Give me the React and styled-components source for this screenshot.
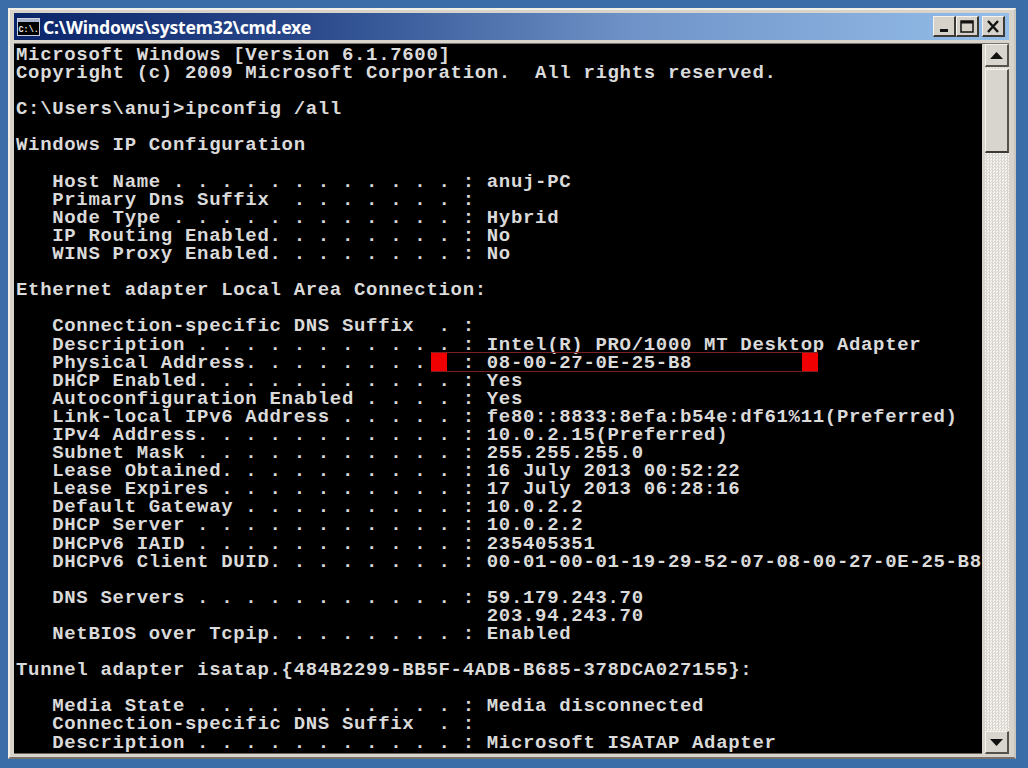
import React from 'react';
import styled, { createGlobalStyle } from 'styled-components';

const GlobalStyle = createGlobalStyle`
    html, body {
        margin: 0;
        padding: 0;
        background-color: #3b6ea8;
    }
`;

const Desktop = styled.div`
    width: 1028px;
    height: 768px;
    box-sizing: border-box;
    padding: 8px 12px 9px 8px;
    background-color: #3b6ea8;
    overflow: hidden;
`;

const Window = styled.div`
    height: 100%;
    box-sizing: border-box;
    display: flex;
    flex-direction: column;
    background-color: #d8d4cc;
    border-top: 2px solid #f2efe6;
    border-left: 2px solid #f2efe6;
    border-right: 2px solid #c9c6c0;
    border-bottom: 2px solid #77736c;
    padding: 3px 5px 3px 4px;
`;

const TitleBar = styled.div`
    height: 27px;
    flex-shrink: 0;
    display: flex;
    align-items: center;
    gap: 3px;
    padding: 0 4px 0 3px;
    background: linear-gradient(to right, #0a246a 0%, #2a4a8c 30%, #6f93c8 62%, #95bee9 100%);
`;

const TitleIcon = styled.svg`
    width: 23px;
    height: 18px;
    flex-shrink: 0;
`;

const TitleText = styled.div`
    flex: 1;
    color: #fff;
    font-family: "Noto Sans", "Liberation Sans", Arial, sans-serif;
    font-weight: bold;
    font-size: 17.6px;
    line-height: 24px;
    letter-spacing: -0.2px;
`;

const CaptionButtons = styled.div`
    display: flex;
    align-items: center;
`;

const CaptionButton = styled.div`
    width: 23px;
    height: 21px;
    margin-left: ${({ gap }) => gap || 0}px;
    box-sizing: border-box;
    background-color: #d6d2ca;
    border-top: 1px solid #f4f2ec;
    border-left: 1px solid #f4f2ec;
    border-right: 2px solid #3c3a36;
    border-bottom: 2px solid #3c3a36;
    display: flex;
    align-items: center;
    justify-content: center;
`;

const Body = styled.div`
    flex: 1;
    min-height: 0;
    margin-top: 3px;
    display: flex;
    border-top: 1px solid #77736c;
`;

const Console = styled.div`
    flex: 1;
    position: relative;
    background-color: #000;
    padding: 2px 0 0 2px;
    overflow: hidden;
    border-bottom: 1px solid #6b6760;
`;

const Line = styled.div`
    height: 18.1px;
    line-height: 18.1px;
    white-space: pre;
    color: #dadada;
    font-family: "Liberation Mono", "Courier New", monospace;
    font-size: 19px;
    font-weight: bold;
    letter-spacing: 0.67px;
`;

const Marker = styled.div`
    position: absolute;
    left: 417px;
    top: 308px;
    width: 387px;
    height: 20px;
    box-sizing: border-box;
    border-top: 1px solid #7a2020;
    border-bottom: 1px solid #7a2020;
    display: flex;
    justify-content: space-between;
`;

const MarkerEnd = styled.div`
    width: 16px;
    background-color: #f00000;
`;

const ScrollBar = styled.div`
    width: 24px;
    margin-left: 3px;
    flex-shrink: 0;
    display: flex;
    flex-direction: column;
    background-color: #ebe9e4;
    background-image: repeating-conic-gradient(#d9d6d0 0 25%, #f4f3ef 0 50%);
    background-size: 3px 3px;
`;

const ScrollButton = styled.div`
    height: 23px;
    flex-shrink: 0;
    box-sizing: border-box;
    background-color: #d8d5ce;
    border-top: 1px solid #f4f2ec;
    border-left: 1px solid #f4f2ec;
    border-right: 2px solid #55524c;
    border-bottom: 2px solid #55524c;
    display: flex;
    align-items: center;
    justify-content: center;
`;

const Thumb = styled.div`
    height: 84px;
    margin-top: 2px;
    flex-shrink: 0;
    box-sizing: border-box;
    background-color: #d8d5ce;
    border-top: 1px solid #f4f2ec;
    border-left: 1px solid #f4f2ec;
    border-right: 2px solid #55524c;
    border-bottom: 2px solid #3c3a36;
`;

const Track = styled.div`
    flex: 1;
`;

const output = `Microsoft Windows [Version 6.1.7600]
Copyright (c) 2009 Microsoft Corporation.  All rights reserved.

C:\\Users\\anuj>ipconfig /all

Windows IP Configuration

   Host Name . . . . . . . . . . . . : anuj-PC
   Primary Dns Suffix  . . . . . . . :
   Node Type . . . . . . . . . . . . : Hybrid
   IP Routing Enabled. . . . . . . . : No
   WINS Proxy Enabled. . . . . . . . : No

Ethernet adapter Local Area Connection:

   Connection-specific DNS Suffix  . :
   Description . . . . . . . . . . . : Intel(R) PRO/1000 MT Desktop Adapter
   Physical Address. . . . . . . . . : 08-00-27-0E-25-B8
   DHCP Enabled. . . . . . . . . . . : Yes
   Autoconfiguration Enabled . . . . : Yes
   Link-local IPv6 Address . . . . . : fe80::8833:8efa:b54e:df61%11(Preferred)
   IPv4 Address. . . . . . . . . . . : 10.0.2.15(Preferred)
   Subnet Mask . . . . . . . . . . . : 255.255.255.0
   Lease Obtained. . . . . . . . . . : 16 July 2013 00:52:22
   Lease Expires . . . . . . . . . . : 17 July 2013 06:28:16
   Default Gateway . . . . . . . . . : 10.0.2.2
   DHCP Server . . . . . . . . . . . : 10.0.2.2
   DHCPv6 IAID . . . . . . . . . . . : 235405351
   DHCPv6 Client DUID. . . . . . . . : 00-01-00-01-19-29-52-07-08-00-27-0E-25-B8

   DNS Servers . . . . . . . . . . . : 59.179.243.70
                                       203.94.243.70
   NetBIOS over Tcpip. . . . . . . . : Enabled

Tunnel adapter isatap.{484B2299-BB5F-4ADB-B685-378DCA027155}:

   Media State . . . . . . . . . . . : Media disconnected
   Connection-specific DNS Suffix  . :
   Description . . . . . . . . . . . : Microsoft ISATAP Adapter`.split('\n');

function CmdIcon() {
    return (
        <TitleIcon viewBox="0 0 23 18">
            <rect x="0.5" y="0.5" width="22" height="17" fill="#000" stroke="#c8d0e0" />
            <rect x="1" y="1" width="21" height="3" fill="#aab4cc" />
            <text x="1.5" y="14" fill="#e8e8e8" fontFamily="Liberation Mono, monospace" fontSize="8.5" fontWeight="bold">C:\.</text>
        </TitleIcon>
    );
}

export default function App() {
    return (
        <>
            <GlobalStyle />
            <Desktop>
                <Window>
                    <TitleBar>
                        <CmdIcon />
                        <TitleText>C:\Windows\system32\cmd.exe</TitleText>
                        <CaptionButtons>
                            <CaptionButton>
                                <svg width="13" height="13" viewBox="0 0 13 13"><rect x="2" y="9" width="8" height="3" fill="#111" /></svg>
                            </CaptionButton>
                            <CaptionButton>
                                <svg width="14" height="13" viewBox="0 0 14 13"><rect x="1" y="1" width="12" height="11" fill="none" stroke="#111" strokeWidth="1.5" /><rect x="1" y="1" width="12" height="2.5" fill="#111" /></svg>
                            </CaptionButton>
                            <CaptionButton gap={3}>
                                <svg width="14" height="13" viewBox="0 0 14 13"><path d="M2 1 L12 12 M12 1 L2 12" stroke="#111" strokeWidth="2.4" fill="none" /></svg>
                            </CaptionButton>
                        </CaptionButtons>
                    </TitleBar>
                    <Body>
                        <Console>
                            {output.map((text, i) => <Line key={i}>{text || ' '}</Line>)}
                            <Marker>
                                <MarkerEnd />
                                <MarkerEnd />
                            </Marker>
                        </Console>
                        <ScrollBar>
                            <ScrollButton>
                                <svg width="13" height="7" viewBox="0 0 13 7"><path d="M6.5 0 L13 7 L0 7 Z" fill="#111" /></svg>
                            </ScrollButton>
                            <Thumb />
                            <Track />
                            <ScrollButton>
                                <svg width="13" height="7" viewBox="0 0 13 7"><path d="M0 0 L13 0 L6.5 7 Z" fill="#111" /></svg>
                            </ScrollButton>
                        </ScrollBar>
                    </Body>
                </Window>
            </Desktop>
        </>
    );
}
